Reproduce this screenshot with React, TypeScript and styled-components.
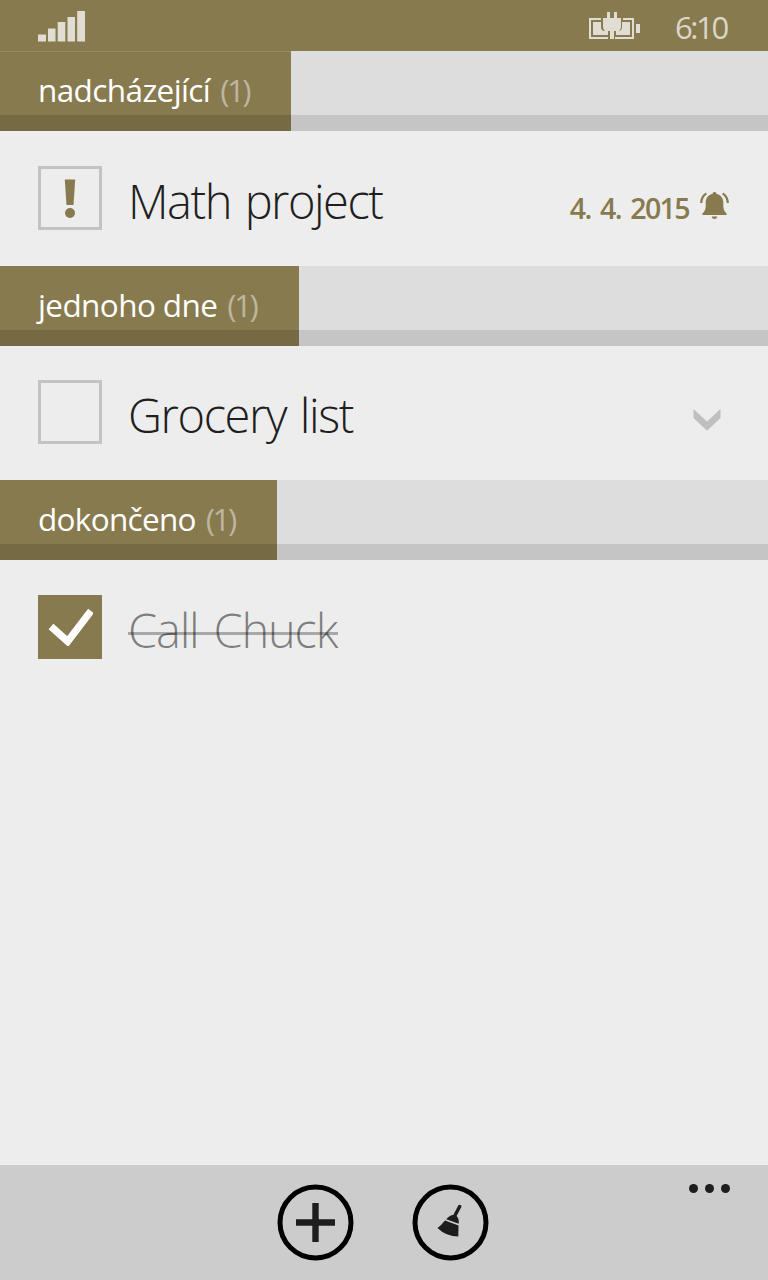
import React from 'react';
import styled, { createGlobalStyle } from 'styled-components';

const accent = '#877a4e';
const family = "'Open Sans', 'Noto Sans', sans-serif";

const GlobalStyle = createGlobalStyle`
  html, body { margin: 0; padding: 0; background: #ededed; }
  body { font-family: ${family}; }
  svg { display: block; }
`;

const Screen = styled.div`
  width: 768px;
  height: 1280px;
  display: flex;
  flex-direction: column;
  overflow: hidden;
  background: #ededed;
`;

const StatusBar = styled.header`
  height: 51px;
  flex: none;
  box-sizing: border-box;
  padding: 11px 39px 0 38px;
  display: flex;
  align-items: flex-start;
  background: ${accent};
  color: #e1ddd2;
`;

const StatusRight = styled.div`
  margin-left: auto;
  display: flex;
  align-items: flex-start;
`;

const Clock = styled.span`
  width: 54px;
  margin-left: 35px;
  font-size: 31px;
  line-height: 32px;
  font-weight: 400;
  letter-spacing: -2.4px;
  white-space: nowrap;
  color: #dbd6c8;
`;

const Tasks = styled.main`
  flex: 1;
`;

const GroupBar = styled.div`
  height: 80px;
  display: flex;
  background: linear-gradient(#dddddd 64px, #c5c5c5 64px);
`;

const GroupTab = styled.h2<{ $width: number; $first?: boolean }>`
  width: ${p => p.$width}px;
  height: 80px;
  margin: 0;
  box-sizing: border-box;
  padding: ${p => (p.$first ? 16 : 17)}px 0 0 38px;
  border-top: ${p => (p.$first ? '1px solid #998c61' : 'none')};
  background: linear-gradient(${accent} 64px, #766a44 64px) border-box;
  background-origin: border-box;
  color: #fff;
  font-size: 31.5px;
  line-height: 44px;
  font-weight: 400;
  white-space: nowrap;
  display: flex;
`;

const GroupName = styled.span<{ $spacing: number }>`
  letter-spacing: ${p => p.$spacing}px;
`;

const Count = styled.span`
  margin-left: 10px;
  font-weight: 400;
  letter-spacing: -2.6px;
  color: #bdb59e;
`;

const TaskRow = styled.div<{ $height?: number; $top?: number }>`
  height: ${p => p.$height ?? 134}px;
  box-sizing: border-box;
  padding: ${p => p.$top ?? 35}px 39px 0 38px;
  display: flex;
  align-items: flex-start;
`;

const CheckBox = styled.div<{ $checked?: boolean }>`
  width: 64px;
  height: 64px;
  flex: none;
  box-sizing: border-box;
  border: 3px solid ${p => (p.$checked ? accent : '#c3c3c3')};
  background: ${p => (p.$checked ? accent : 'transparent')};
  display: flex;
  align-items: center;
  justify-content: center;
`;

const Title = styled.span<{ $done?: boolean; $spacing: number; $gap: number }>`
  margin-left: 26px;
  font-size: 47px;
  line-height: 70px;
  font-weight: 300;
  letter-spacing: ${p => p.$spacing}px;
  word-spacing: ${p => p.$gap}px;
  padding-right: ${p => (p.$done ? 1 : 0)}px;
  white-space: nowrap;
  color: ${p => (p.$done ? 'rgba(0, 0, 0, 0.47)' : '#1f1f1f')};
  background: ${p => (p.$done ? 'linear-gradient(transparent 37px, #a8a8a8 37px, #a8a8a8 40px, transparent 40px)' : 'none')};
`;

const Due = styled.div`
  margin: 22px 0 0 auto;
  display: flex;
  color: ${accent};
  font-size: 28.5px;
  line-height: 40px;
  font-weight: 600;
  letter-spacing: -1.6px;
  word-spacing: 3.5px;
  white-space: nowrap;
`;

const BellIcon = styled.svg`
  margin: 4px 0 0 11px;
`;

const Chevron = styled.svg`
  margin: 29px 8px 0 auto;
`;

const AppBar = styled.footer`
  height: 115px;
  flex: none;
  box-sizing: border-box;
  padding: 19px 37px 0;
  display: grid;
  grid-template-columns: 240px auto 1fr;
  align-items: start;
  background: #cccccc;
`;

const Actions = styled.div`
  grid-column: 2;
  display: flex;
  gap: 58px;
`;

const RoundButton = styled.button`
  width: 77px;
  height: 77px;
  padding: 0;
  border: 0;
  background: none;
`;

const MoreButton = styled.button`
  justify-self: end;
  padding: 0;
  border: 0;
  background: none;
`;

function Signal() {
  return (
    <svg width="48" height="31" fill="#e1ddd2">
      <path d="M0 23.5h8v7H0zM10 17.500h7.500v13H10zM19.700 11h7.600v19.500h-7.600zM29.500 6h7.500v24.500h-7.500zM39.200 0h7.800v30.500h-7.800z" />
    </svg>
  );
}

function Battery() {
  return (
    <svg width="51" height="29" viewBox="589 11 51 29" fill="#e1ddd2">
      <path d="M589 18H601V20H591V37H608V39H589ZM623 18H634V39H615V37H632V20H623ZM636 24H640V33H636Z" />
      <path d="M593 22H601V27Q601 31 605 31H608V35H593ZM622 22H630V35H616V31H618Q622 31 622 27Z" />
      <path d="M607 12H610V18H614V12H617V18H621V27Q621 29 619 31H614V39H610V31H605Q603 29 603 27V18H607Z" />
    </svg>
  );
}

function Bell() {
  return (
    <BellIcon width="29" height="28" viewBox="0 0 29 28" fill={accent}>
      <path d="M14.500 0C13 0 12.700 .8 12.700 1.700C8.300 2.700 5.900 6 5.700 10V14C5.600 17.500 5 19 2.500 21.300V23H26.500V21.300C24 19 23.400 17.500 23.300 14V10C23.100 6 20.700 2.700 16.300 1.700C16.300 .8 16 0 14.500 0Z" />
      <path d="M11.600 24.500H17.400Q16.700 27 14.500 27Q12.300 27 11.600 24.500Z" />
      <path d="M6.300 1.300Q1.200 5 1.200 11M22.700 1.300Q27.800 5 27.800 11" fill="none" stroke={accent} strokeWidth="2.200" />
    </BellIcon>
  );
}

export default function App() {
  return (
    <>
      <GlobalStyle />
      <Screen>
        <StatusBar>
          <Signal />
          <StatusRight>
            <Battery />
            <Clock>6:10</Clock>
          </StatusRight>
        </StatusBar>
        <Tasks>
          <GroupBar>
            <GroupTab $width={291} $first>
              <GroupName $spacing={-0.6}>nadcházející</GroupName>
              <Count>(1)</Count>
            </GroupTab>
          </GroupBar>
          <TaskRow $height={135}>
            <CheckBox>
              <svg width="12" height="40" fill={accent}>
                <path d="M.8 1.500H11.200L9.500 27H2.500Z" />
                <circle cx="6" cy="35" r="5" />
              </svg>
            </CheckBox>
            <Title $spacing={-1.5} $gap={3}>Math project</Title>
            <Due>
              4. 4. 2015
              <Bell />
            </Due>
          </TaskRow>
          <GroupBar>
            <GroupTab $width={299}>
              <GroupName $spacing={-0.6}>jednoho dne</GroupName>
              <Count>(1)</Count>
            </GroupTab>
          </GroupBar>
          <TaskRow $top={34.4}>
            <CheckBox />
            <Title $spacing={-1.4} $gap={3}>Grocery list</Title>
            <Chevron width="28" height="22" fill="#bfbfbf">
              <path d="M.5 0L14 12.500L27.500 0V9L14 21.700L.5 9Z" />
            </Chevron>
          </TaskRow>
          <GroupBar>
            <GroupTab $width={277}>
              <GroupName $spacing={-0.7}>dokončeno</GroupName>
              <Count>(1)</Count>
            </GroupTab>
          </GroupBar>
          <TaskRow>
            <CheckBox $checked>
              <svg width="46" height="38" viewBox="-1.500 -1 46 38">
                <path d="M2.500 17.500L19.200 32.500L42.500 2" fill="none" stroke="#fff" strokeWidth="7.200" />
              </svg>
            </CheckBox>
            <Title $done $spacing={-1.2} $gap={4}>Call Chuck</Title>
          </TaskRow>
        </Tasks>
        <AppBar>
          <Actions>
            <RoundButton aria-label="add">
              <svg width="77" height="77">
                <circle cx="38.500" cy="38.500" r="35.500" fill="none" stroke="#000" strokeWidth="5" />
                <path d="M35.300 19H41.700V35.300H58V41.700H41.700V58H35.300V41.700H19V35.300H35.300Z" fill="#1d1d1d" />
              </svg>
            </RoundButton>
            <RoundButton aria-label="clean">
              <svg width="77" height="77" viewBox="412 1184 77 77">
                <circle cx="450.500" cy="1222.500" r="35.500" fill="none" stroke="#000" strokeWidth="5" />
                <g fill="#1d1d1d">
                  <path d="M458.400 1205.300Q459.500 1204.300 461.300 1205.600Q461.600 1206.500 461.200 1207.300L456.600 1216Q459.300 1218.500 458.700 1223.800L446.200 1219.300Q449.500 1215.200 453.300 1215Z" />
                  <path d="M445 1220.500L458.500 1225.400L458.300 1236.500Q446 1236.500 437.500 1228Q441.500 1225 445 1220.500Z" />
                </g>
              </svg>
            </RoundButton>
          </Actions>
          <MoreButton aria-label="more">
            <svg width="43" height="10" fill="#1d1d1d">
              <circle cx="5.500" cy="4.500" r="4.500" />
              <circle cx="21.500" cy="4.500" r="4.500" />
              <circle cx="37.500" cy="4.500" r="4.500" />
            </svg>
          </MoreButton>
        </AppBar>
      </Screen>
    </>
  );
}
